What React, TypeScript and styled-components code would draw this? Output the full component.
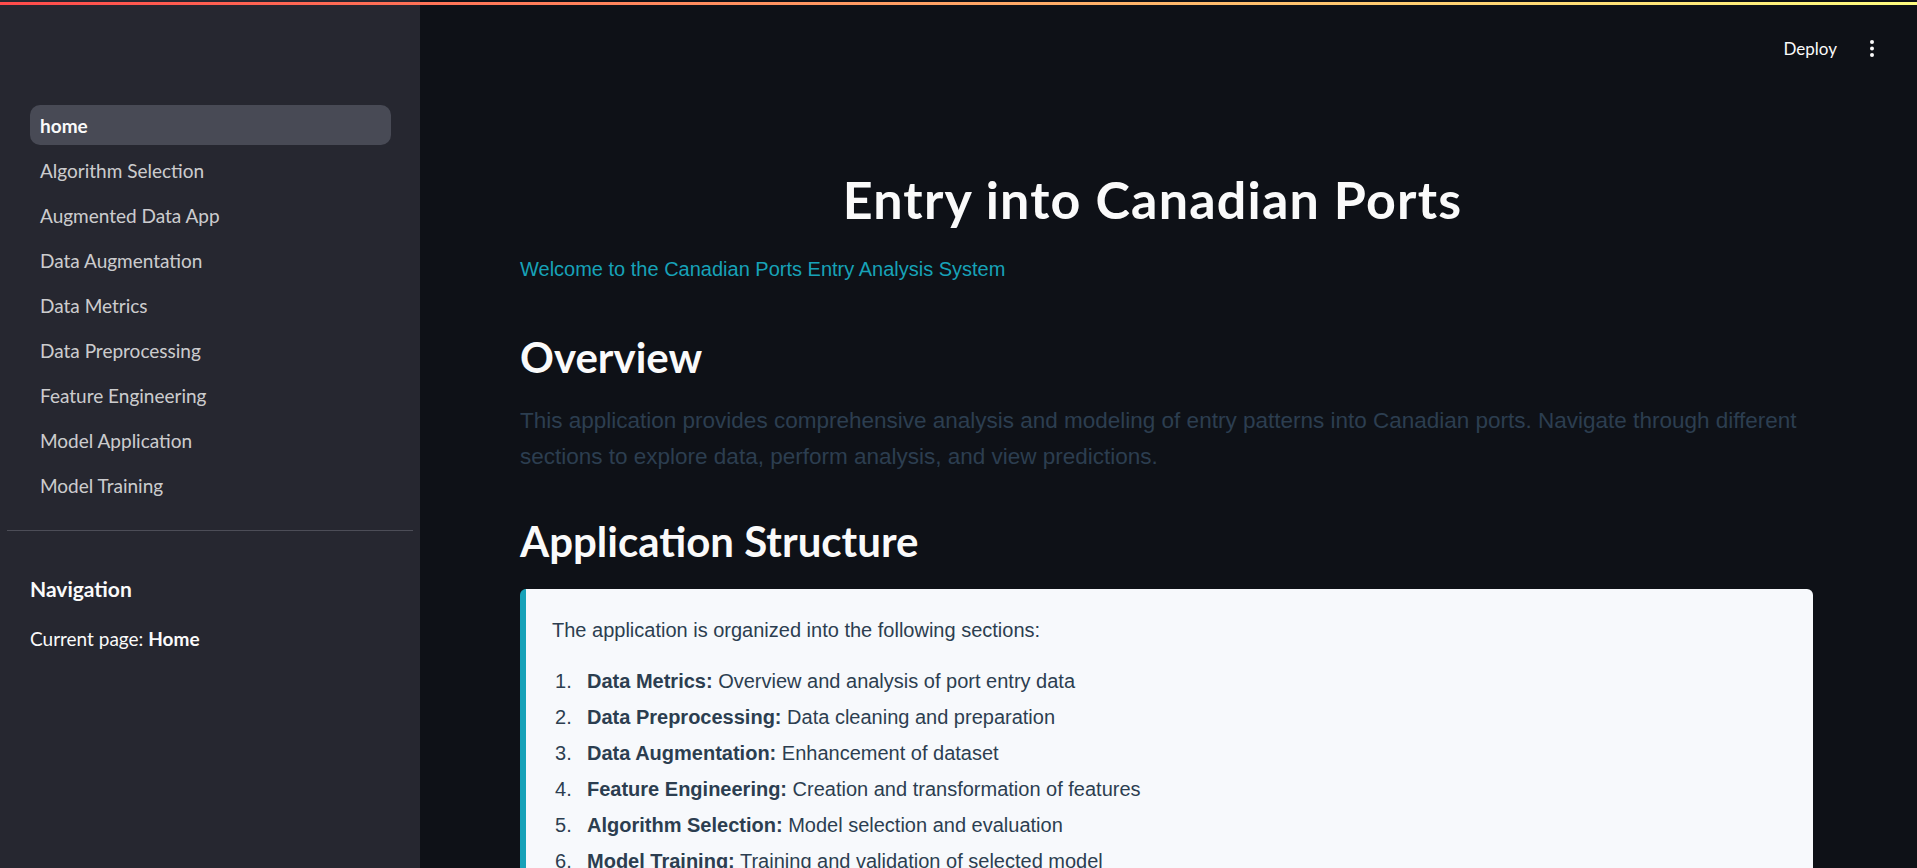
import React from "react";
import styled, { createGlobalStyle } from "styled-components";

const GlobalStyle = createGlobalStyle`
  html, body { margin: 0; padding: 0; background: #0e1117; }
  body { overflow: hidden; font-family: "Lato", "Liberation Sans", sans-serif; }
  * { box-sizing: border-box; }
`;

const Decoration = styled.div`
  position: fixed;
  top: 2px;
  left: 0;
  right: 0;
  height: 3px;
  background: linear-gradient(90deg, rgb(255, 75, 75), rgb(255, 253, 128));
  z-index: 10;
`;

const Shell = styled.div`
  display: flex;
  width: 100%;
  height: 868px;
  overflow: hidden;
`;

const Sidebar = styled.aside`
  width: 420px;
  flex: 0 0 420px;
  background: #262730;
  display: flex;
  flex-direction: column;
  padding-top: 105px;
`;

const NavList = styled.nav`
  display: flex;
  flex-direction: column;
  gap: 5px;
  padding: 0 29px 0 30px;
`;

const NavItem = styled.a<{ $active?: boolean }>`
  display: flex;
  align-items: center;
  height: 40px;
  padding: 0 10px;
  border-radius: 10px;
  font-family: "Lato", sans-serif;
  font-size: 19px;
  text-decoration: none;
  color: ${(p) => (p.$active ? "#fafafa" : "rgba(250,250,250,0.8)")};
  font-weight: ${(p) => (p.$active ? 700 : 400)};
  background: ${(p) => (p.$active ? "#484a55" : "transparent")};
`;

const Divider = styled.hr`
  margin: 25px 7px 0 7px;
  border: none;
  border-top: 1px solid #4c4d57;
  height: 0;
`;

const SideSection = styled.div`
  padding: 0 30px;
  color: #fafafa;
`;

const SideHeading = styled.h3`
  margin: 43px 0 0 0;
  font-family: "Lato", sans-serif;
  font-size: 21px;
  line-height: 30px;
  font-weight: 700;
  color: #fafafa;
`;

const SideText = styled.p`
  margin: 20px 0 0 0;
  font-family: "Lato", sans-serif;
  font-size: 19px;
  line-height: 30px;
  color: #fafafa;
  b { font-weight: 700; }
`;

const Main = styled.main`
  flex: 1;
  display: flex;
  flex-direction: column;
  min-width: 0;
`;

const Header = styled.header`
  height: 96px;
  flex: 0 0 96px;
  display: flex;
  justify-content: flex-end;
  align-items: center;
  gap: 23px;
  padding-right: 33px;
`;

const DeployButton = styled.button`
  background: none;
  border: none;
  padding: 0;
  font-family: "Lato", sans-serif;
  font-size: 17px;
  color: #fafafa;
  cursor: pointer;
`;

const MenuIcon = styled.svg`
  width: 24px;
  height: 24px;
  display: block;
`;

const Content = styled.div`
  flex: 0 0 auto;
  padding: 0 104px 0 100px;
  display: flex;
  flex-direction: column;
`;

const Title = styled.h1`
  margin: 73px 0 0 0;
  padding-right: 28px;
  text-align: center;
  font-family: "Lato", sans-serif;
  font-weight: 700;
  font-size: 52px;
  letter-spacing: 1.2px;
  line-height: 60px;
  color: #fafafa;
`;

const Lead = styled.p`
  margin: 24px 0 0 0;
  font-family: "Liberation Sans", Arial, sans-serif;
  font-size: 20px;
  line-height: 32px;
  color: #17a2b8;
`;

const SectionHeading = styled.h2<{ $gap: number }>`
  margin: ${(p) => p.$gap}px 0 0 0;
  font-family: "Lato", sans-serif;
  font-weight: 700;
  font-size: 42px;
  line-height: 50px;
  color: #fafafa;
`;

const Body = styled.p`
  margin: 21px 0 0 0;
  font-family: "Liberation Sans", Arial, sans-serif;
  font-size: 22.5px;
  line-height: 36px;
  color: #2c3e50;
`;

const Callout = styled.div`
  margin-top: 23px;
  background: #f7f9fc;
  border-left: 6px solid #17a2b8;
  border-radius: 6px;
  padding: 25px 25px 20px 26px;
  font-family: "Liberation Sans", Arial, sans-serif;
  font-size: 20px;
  line-height: 32px;
  color: #2c3e50;
`;

const CalloutText = styled.p`
  margin: 0 0 19px 0;
`;

const List = styled.ol`
  list-style: none;
  margin: 0;
  padding: 0 0 0 3px;
`;

const Item = styled.li`
  display: flex;
  margin-bottom: 4px;
  b { font-weight: 700; }
`;

const Num = styled.span`
  width: 32px;
  flex: 0 0 32px;
`;

const navItems = [
  "home",
  "Algorithm Selection",
  "Augmented Data App",
  "Data Augmentation",
  "Data Metrics",
  "Data Preprocessing",
  "Feature Engineering",
  "Model Application",
  "Model Training",
];

const sections: [string, string][] = [
  ["Data Metrics:", "Overview and analysis of port entry data"],
  ["Data Preprocessing:", "Data cleaning and preparation"],
  ["Data Augmentation:", "Enhancement of dataset"],
  ["Feature Engineering:", "Creation and transformation of features"],
  ["Algorithm Selection:", "Model selection and evaluation"],
  ["Model Training:", "Training and validation of selected model"],
  ["Model Application:", "Application of trained model to new data"],
];

export default function App() {
  return (
    <>
      <GlobalStyle />
      <Decoration />
      <Shell>
        <Sidebar>
          <NavList>
            {navItems.map((n, i) => (
              <NavItem key={n} $active={i === 0} href="#">
                {n}
              </NavItem>
            ))}
          </NavList>
          <Divider />
          <SideSection>
            <SideHeading>Navigation</SideHeading>
            <SideText>
              Current page: <b>Home</b>
            </SideText>
          </SideSection>
        </Sidebar>
        <Main>
          <Header>
            <DeployButton>Deploy</DeployButton>
            <MenuIcon viewBox="0 0 24 24" fill="#fafafa">
              <circle cx="12" cy="6" r="2" />
              <circle cx="12" cy="12.5" r="2" />
              <circle cx="12" cy="19" r="2" />
            </MenuIcon>
          </Header>
          <Content>
            <Title>Entry into Canadian Ports</Title>
            <Lead>Welcome to the Canadian Ports Entry Analysis System</Lead>
            <SectionHeading $gap={47}>Overview</SectionHeading>
            <Body>
              This application provides comprehensive analysis and modeling of entry patterns into
              Canadian ports. Navigate through different sections to explore data, perform analysis,
              and view predictions.
            </Body>
            <SectionHeading $gap={41}>Application Structure</SectionHeading>
            <Callout>
              <CalloutText>The application is organized into the following sections:</CalloutText>
              <List>
                {sections.map(([b, t], i) => (
                  <Item key={b}>
                    <Num>{i + 1}.</Num>
                    <span>
                      <b>{b}</b> {t}
                    </span>
                  </Item>
                ))}
              </List>
            </Callout>
          </Content>
        </Main>
      </Shell>
    </>
  );
}
